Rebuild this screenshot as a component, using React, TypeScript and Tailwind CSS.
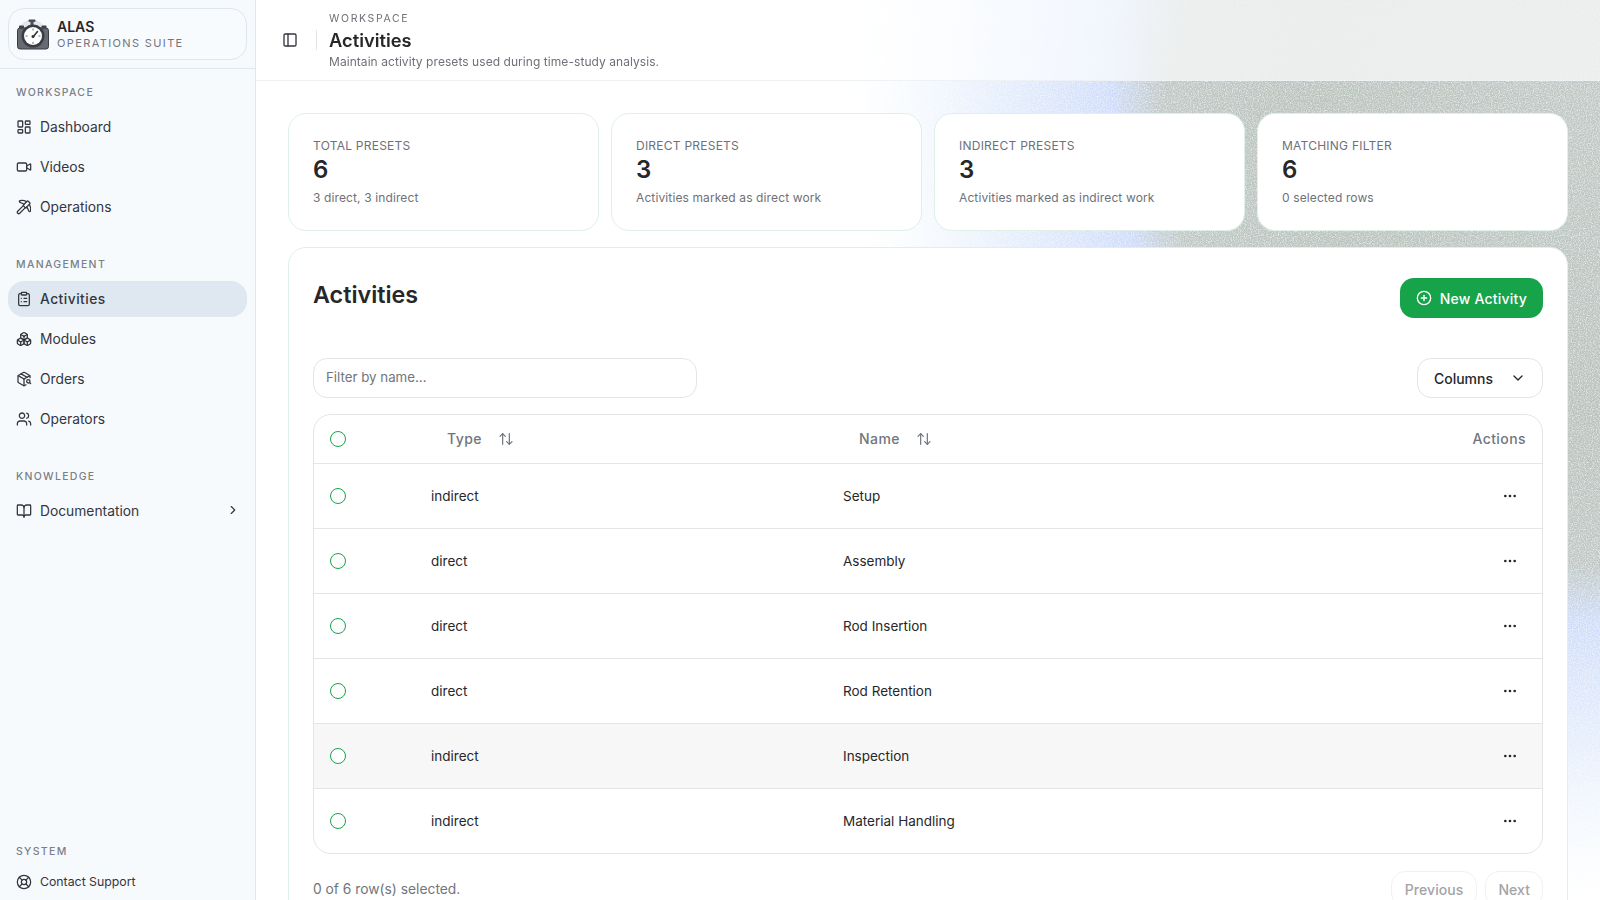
import React from "react";
import { LayoutDashboard, Video, Pickaxe, ClipboardList, Boxes, PackageSearch, Users, BookOpen, ChevronRight, LifeBuoy, PanelLeft, CirclePlus, ChevronDown, ArrowUpDown, Ellipsis } from "lucide-react";

const F = { fontFamily: "Inter, 'Liberation Sans', sans-serif" };

function Logo() {
  return (
    <svg width="32" height="31" viewBox="0 0 32 31" className="shrink-0">
      <circle cx="15" cy="14" r="13.5" fill="#e3e7ea" />
      <rect x="11.5" y="0.5" width="7" height="2.6" rx="1" fill="#4b4f57" />
      <rect x="13.5" y="3" width="3" height="3" fill="#4b4f57" />
      <rect x="0.5" y="9" width="31" height="21" rx="2.5" fill="#666a72" stroke="#3a3d44" />
      <rect x="2" y="6.5" width="5" height="3" rx="0.8" fill="#3f4249" />
      <rect x="24.5" y="6.5" width="5" height="3" rx="0.8" fill="#3f4249" />
      <circle cx="16" cy="17" r="11.5" fill="#3a3d44" />
      <circle cx="16" cy="17" r="9" fill="#fff" />
      <path d="M16 18 L20.5 12.5" stroke="#33363c" strokeWidth="1.6" strokeLinecap="round" />
      <circle cx="16" cy="17.5" r="1.5" fill="#33363c" />
      <path d="M16 9.5v2M8.5 17h2M21.5 17h2M16 23v2" stroke="#5d6169" strokeWidth="0.9" />
    </svg>
  );
}

function Grain() {
  return (
    <svg className="absolute inset-0 h-full w-full" width="1344" height="900" viewBox="0 0 1344 900" preserveAspectRatio="none" aria-hidden="true">
      <defs>
        <radialGradient id="mesh" gradientUnits="userSpaceOnUse" cx="0" cy="0" r="1" gradientTransform="translate(1344 100) scale(750 800)">
          <stop offset="0" stopColor="#c0c9c5" />
          <stop offset="0.4" stopColor="#bac3be" />
          <stop offset="0.58" stopColor="#bfc8c4" />
          <stop offset="0.65" stopColor="#cfdcf9" />
          <stop offset="0.8" stopColor="#dce8fb" stopOpacity="0.75" />
          <stop offset="1" stopColor="#e8f1fc" stopOpacity="0" />
        </radialGradient>
        <filter id="grain" x="0" y="0" width="100%" height="100%" colorInterpolationFilters="sRGB">
          <feTurbulence type="fractalNoise" baseFrequency="0.85" numOctaves="2" seed="4" result="n" />
          <feColorMatrix in="n" type="matrix" values="0 0 0 0 0  0 0 0 0 0  0 0 0 0 0  1.5 0 0 0 0.1" result="a" />
          <feComposite in="SourceGraphic" in2="a" operator="in" />
        </filter>
      </defs>
      <rect width="1344" height="900" fill="url(#mesh)" filter="url(#grain)" />
    </svg>
  );
}

function NavLabel({ children }: { children: React.ReactNode }) {
  return <div className="flex h-8 items-center px-2 text-[10.5px] font-medium tracking-[0.125em] text-[#7b7f87]">{children}</div>;
}

function NavItem({ icon: Icon, label, active, chevron }: { icon: any; label: string; active?: boolean; chevron?: boolean }) {
  return (
    <div className={`flex h-9 items-center gap-2 rounded-2xl px-2 text-[13.8px] text-[#33363d] ${active ? "bg-[#dfe8f1] font-medium tracking-[0.035em]" : ""}`}>
      <Icon size={16} strokeWidth={1.9} className="shrink-0" />
      <span>{label}</span>
      {chevron && <ChevronRight size={14} className="ml-auto translate-x-px -translate-y-px" />}
    </div>
  );
}

function Sidebar() {
  return (
    <aside className="flex h-full w-64 shrink-0 flex-col border-r border-[#dfe8f1] bg-[#f7fafd]">
      <div className="border-b border-[#e0e8ef] p-2">
        <div className="flex h-[52px] items-center gap-2 rounded-2xl border border-[#dfe6ec] bg-[#f8fbfd] px-2">
          <Logo />
          <div className="flex flex-col">
            <span className="text-[14px] font-semibold leading-[18px] text-[#27272a]">ALAS</span>
            <span className="text-[11px] leading-[14px] tracking-[0.125em] text-[#71757d]">OPERATIONS SUITE</span>
          </div>
        </div>
      </div>
      <nav className="flex flex-1 flex-col gap-6 px-2 pt-2">
        <div>
          <NavLabel>WORKSPACE</NavLabel>
          <div className="flex flex-col gap-1">
            <NavItem icon={LayoutDashboard} label="Dashboard" />
            <NavItem icon={Video} label="Videos" />
            <NavItem icon={Pickaxe} label="Operations" />
          </div>
        </div>
        <div>
          <NavLabel>MANAGEMENT</NavLabel>
          <div className="flex flex-col gap-1">
            <NavItem icon={ClipboardList} label="Activities" active />
            <NavItem icon={Boxes} label="Modules" />
            <NavItem icon={PackageSearch} label="Orders" />
            <NavItem icon={Users} label="Operators" />
          </div>
        </div>
        <div>
          <NavLabel>KNOWLEDGE</NavLabel>
          <NavItem icon={BookOpen} label="Documentation" chevron />
        </div>
      </nav>
      <div className="px-2 pb-1">
        <NavLabel>SYSTEM</NavLabel>
        <div className="flex h-7 items-center gap-2 px-2 text-[12.3px] text-[#33363d]">
          <LifeBuoy size={16} strokeWidth={1.9} />
          <span>Contact Support</span>
        </div>
      </div>
    </aside>
  );
}

function Stat({ label, value, sub }: { label: string; value: string; sub: string }) {
  return (
    <div className="rounded-[18px] border border-[#dff0e8] bg-white p-6">
      <div className="text-[12px] leading-4 tracking-[0.02em] text-[#6e7179]">{label}</div>
      <div className="text-[24px] font-semibold leading-8 text-[#27272a]">{value}</div>
      <div className="mt-1 text-[12px] leading-4 tracking-[0.01em] text-[#6e7179]">{sub}</div>
    </div>
  );
}

const rows: [string, string][] = [
  ["indirect", "Setup"],
  ["direct", "Assembly"],
  ["direct", "Rod Insertion"],
  ["direct", "Rod Retention"],
  ["indirect", "Inspection"],
  ["indirect", "Material Handling"],
];

function Check() {
  return <span className="block h-4 w-4 rounded-full border border-[#16a34a] bg-white" />;
}

function DataTable() {
  return (
    <div className="mt-4 overflow-hidden rounded-[18px] border border-[#e5e5e5]">
      <table className="w-full table-fixed border-collapse text-[13.5px] text-[#27272a]">
        <colgroup>
          <col className="w-[117px]" />
          <col className="w-[412px]" />
          <col />
          <col className="w-[120px]" />
        </colgroup>
        <thead>
          <tr className="h-12 border-b border-[#e5e5e5] text-left text-[14px] text-[#71757d]">
            <th className="pl-4"><Check /></th>
            <th className="font-medium">
              <span className="inline-flex items-center gap-4 pl-4 tracking-[0.03em]">Type <ArrowUpDown size={16} strokeWidth={1.8} /></span>
            </th>
            <th className="font-medium">
              <span className="inline-flex items-center gap-4 pl-4 tracking-[0.03em]">Name <ArrowUpDown size={16} strokeWidth={1.8} /></span>
            </th>
            <th className="pr-4 text-right font-medium tracking-[0.03em]">Actions</th>
          </tr>
        </thead>
        <tbody>
          {rows.map(([t, n], i) => (
            <tr key={n} className={`h-[65px] ${i < rows.length - 1 ? "border-b border-[#e5e5e5]" : ""} ${i === 4 ? "bg-[#f7f7f7]" : ""}`}>
              <td className="pl-4"><Check /></td>
              <td className={i === 5 ? "" : "pt-[2px]"}>{t}</td>
              <td className={i === 5 ? "" : "pt-[2px]"}>{n}</td>
              <td className="pr-4">
                <div className="ml-auto flex h-8 w-8 items-center justify-center text-[#27272a]"><Ellipsis size={16} strokeWidth={2} /></div>
              </td>
            </tr>
          ))}
        </tbody>
      </table>
    </div>
  );
}

function Main() {
  return (
    <main className="relative flex h-full min-w-0 flex-1 flex-col overflow-hidden bg-white">
      <Grain />
      <header className="relative flex h-[81px] shrink-0 items-center border-b border-[#eef2f4] bg-white/65 pl-6 pt-[2px] backdrop-blur-xl">
        <PanelLeft size={16} strokeWidth={2} className="ml-[2px] -translate-y-[1px] text-[#33363d]" />
        <div className="ml-[18px] mr-3 h-5 w-px -translate-y-[1px] bg-[#e5e5e5]" />
        <div className="flex flex-col">
          <span className="text-[10.5px] leading-[14px] tracking-[0.155em] text-[#6e7179]">WORKSPACE</span>
          <span className="text-[18.3px] font-semibold leading-[28px] text-[#27272a]">Activities</span>
          <span className="text-[12px] leading-[16px] tracking-[0.005em] text-[#6e7179]">Maintain activity presets used during time-study analysis.</span>
        </div>
      </header>
      <div className="relative flex flex-col gap-4 px-8 pt-8">
        <div className="grid grid-cols-4 gap-3">
          <Stat label="TOTAL PRESETS" value="6" sub="3 direct, 3 indirect" />
          <Stat label="DIRECT PRESETS" value="3" sub="Activities marked as direct work" />
          <Stat label="INDIRECT PRESETS" value="3" sub="Activities marked as indirect work" />
          <Stat label="MATCHING FILTER" value="6" sub="0 selected rows" />
        </div>
        <section className="rounded-[18px] border border-[#dff0e8] bg-white px-6 pt-[30px]">
          <div className="flex items-start justify-between">
            <h2 className="mt-px text-[23.3px] font-semibold leading-8 text-[#27272a]">Activities</h2>
            <button className="flex h-10 items-center gap-2 rounded-[14px] bg-[#16a34a] px-4 text-[14px] font-medium tracking-[0.015em] text-white">
              <CirclePlus size={16} strokeWidth={2} /> New Activity
            </button>
          </div>
          <div className="mt-10 flex items-center justify-between">
            <div className="flex h-10 w-96 items-center rounded-[14px] border border-[#e5e5e5] px-3 text-[13.3px] text-[#71757d]">Filter by name...</div>
            <button className="flex h-10 items-center gap-[17px] rounded-[14px] border border-[#e5e5e5] px-4 text-[14px] font-medium text-[#27272a]">
              Columns <ChevronDown size={16} strokeWidth={2} />
            </button>
          </div>
          <DataTable />
          <div className="mt-[17px] flex items-center justify-between pb-6">
            <span className="text-[13.8px] text-[#71757d]">0 of 6 row(s) selected.</span>
            <div className="flex gap-2">
              <button className="flex h-9 items-center rounded-[14px] border border-[#f1f1f1] px-[13px] text-[14px] font-medium tracking-[0.005em] text-[#a3a3a8]">Previous</button>
              <button className="flex h-9 items-center rounded-[14px] border border-[#f1f1f1] px-3 text-[14px] font-medium tracking-[0.005em] text-[#a3a3a8]">Next</button>
            </div>
          </div>
        </section>
      </div>
    </main>
  );
}

export default function App() {
  return (
    <div className="flex h-screen w-full overflow-hidden bg-white" style={F}>
      <Sidebar />
      <Main />
    </div>
  );
}
